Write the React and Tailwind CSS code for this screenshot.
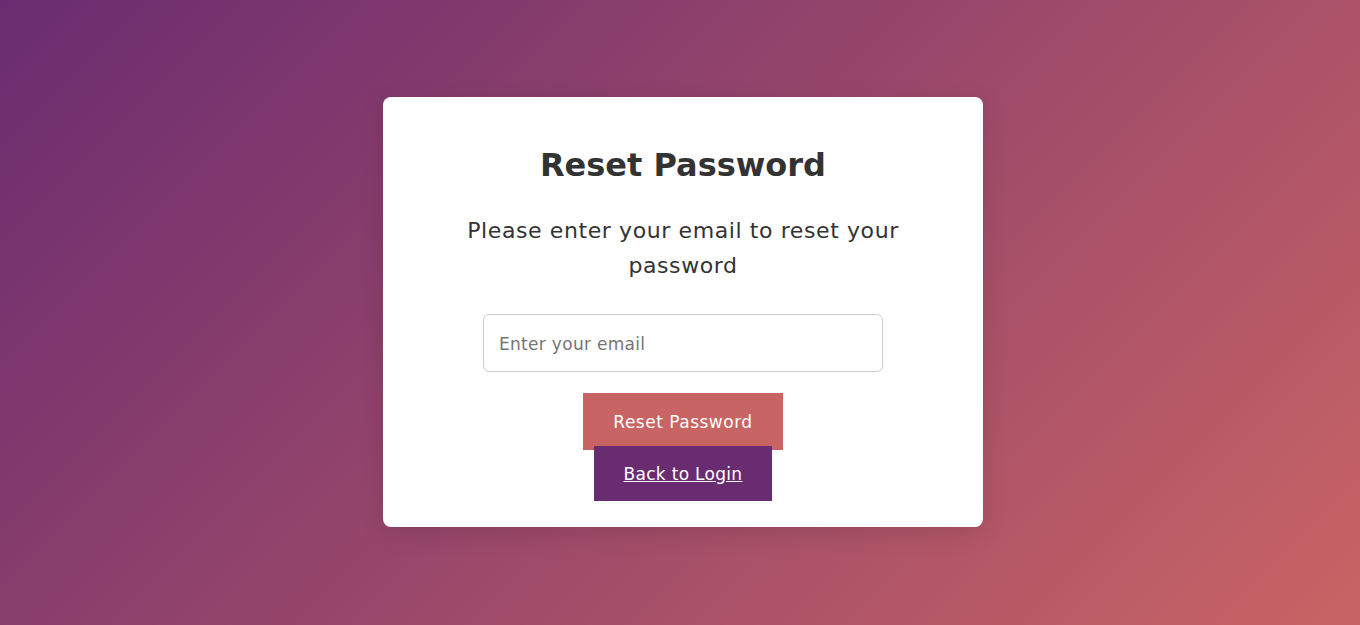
import React, { useState } from "react";

const ResetPassword = () => {
  const [email, setEmail] = useState("");

  return (
    <div className="min-h-screen pl-[6px] pb-[2px] flex items-center justify-center bg-[linear-gradient(135deg,#6a2c70,#c96464)] font-['DejaVu_Sans',sans-serif]">
      <div className="w-[600px] bg-white rounded-lg shadow-[0_6px_24px_rgba(0,0,0,0.12)] px-10 pt-[44px] pb-[26px] flex flex-col items-center text-center">
        <h1 className="text-[32px] leading-[48px] font-bold text-[#333]">
          Reset Password
        </h1>
        <p className="mt-6 text-[22px] leading-[35px] tracking-[0.6px] text-[#333]">
          Please enter your email to reset your
          <br />
          password
        </p>
        <input
          type="email"
          value={email}
          onChange={(e) => setEmail(e.target.value)}
          placeholder="Enter your email"
          className="mt-[31px] w-[400px] h-[58px] px-[15px] pt-[2px] border border-[#ccc] rounded-md text-[17px] tracking-[0.3px] text-[#333] placeholder:text-[#757575] outline-none"
        />
        <button
          type="button"
          className="mt-[21px] h-[57px] w-[200px] pt-[4px] bg-[#c86464] text-white text-[17px] tracking-[0.5px]">
          Reset Password
        </button>
        <a
          href="#"
          className="-mt-1 h-[55px] px-[30px] pt-[4px] flex items-center bg-[#6a2c70] text-white text-[17px] tracking-[0.3px] underline">
          Back to Login
        </a>
      </div>
    </div>
  );
};

export default function App() {
  return <ResetPassword />;
}
